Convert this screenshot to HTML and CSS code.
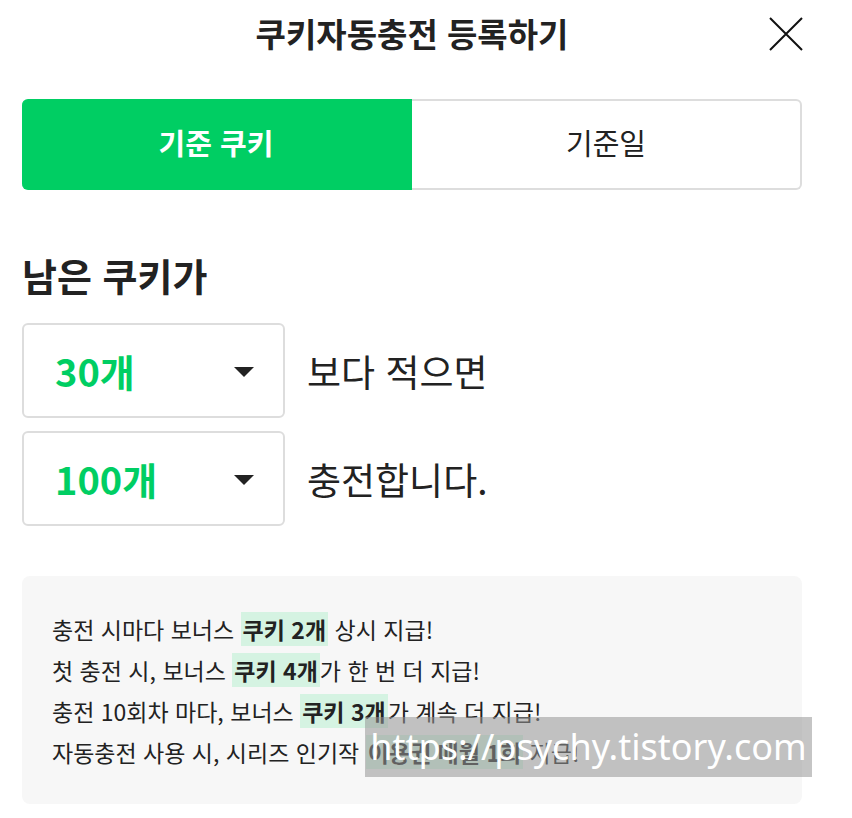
FILE: index.html
```html
<!DOCTYPE html>
<html lang="ko">
<head>
    <meta charset="UTF-8">
    <meta name="viewport" content="width=device-width, initial-scale=1.0">
    <title>쿠키자동충전 등록하기</title>
    <link rel="stylesheet" href="styles.css">
</head>
<body>
    <div class="sheet">
        <header class="sheet-head">
            <h1>쿠키자동충전 등록하기</h1>
            <button class="close" aria-label="닫기">
                <svg width="34" height="34" viewBox="0 0 34 34">
                    <path d="M1 1 L33 33 M33 1 L1 33" stroke="#111" stroke-width="2" fill="none"/>
                </svg>
            </button>
        </header>

        <div class="tabs">
            <button class="tab active">기준 쿠키</button>
            <button class="tab">기준일</button>
        </div>

        <h2 class="label">남은 쿠키가</h2>

        <div class="row">
            <div class="select">
                <span class="value">30개</span>
                <span class="caret"></span>
            </div>
            <span class="suffix">보다 적으면</span>
        </div>
        <div class="row">
            <div class="select">
                <span class="value">100개</span>
                <span class="caret"></span>
            </div>
            <span class="suffix">충전합니다.</span>
        </div>

        <!-- 혜택 안내 -->
        <div class="notice">
            <p>충전 시마다 보너스 <b>쿠키 2개</b> 상시 지급!</p>
            <p>첫 충전 시, 보너스 <b>쿠키 4개</b>가 한 번 더 지급!</p>
            <p>충전 10회차 마다, 보너스 <b>쿠키 3개</b>가 계속 더 지급!</p>
            <p>자동충전 사용 시, 시리즈 인기작 <b>이용권 매월 1회</b> 지급!</p>
        </div>
    </div>

    <div class="watermark">https://psychy.tistory.com</div>
</body>
</html>
```

FILE: styles.css
```css
body {
    margin: 0;
    background: #fff;
    color: #222;
    font-family: "Noto Sans CJK KR", "Noto Sans", sans-serif;
}
.sheet {
    width: 780px;
    margin-left: 22px;
}
.sheet-head {
    height: 70px;
    box-sizing: border-box;
    padding-bottom: 4px;
    display: flex;
    align-items: center;
    justify-content: center;
    position: relative;
}
.sheet-head h1 {
    margin: 0;
    font-size: 33px;
    font-weight: 700;
    line-height: 40px;
}
.close {
    position: absolute;
    right: -1px;
    top: 17px;
    width: 34px;
    height: 34px;
    padding: 0;
    border: none;
    background: none;
}
.close svg {
    display: block;
}
.tabs {
    margin-top: 29px;
    display: flex;
    height: 91px;
}
.tab {
    flex: 1;
    font-family: inherit;
    font-size: 29px;
    color: #222;
    background: #fff;
    border: 2px solid #ddd;
    border-left: none;
    border-radius: 0 6px 6px 0;
    padding: 0 0 5px;
}
.tab.active {
    background: #00ce63;
    border-color: #00ce63;
    color: #fff;
    font-weight: 700;
    border-radius: 6px 0 0 6px;
}
.label {
    margin: 60px 0 23px;
    font-size: 38px;
    font-weight: 700;
    line-height: 50px;
}
.row {
    display: flex;
    align-items: center;
    gap: 22px;
    margin-bottom: 13px;
}
.select {
    width: 263px;
    height: 95px;
    box-sizing: border-box;
    border: 2px solid #ddd;
    border-radius: 6px;
    display: flex;
    align-items: center;
    justify-content: space-between;
    padding: 0 29px 0 31px;
}
.value {
    color: #00ce63;
    font-size: 38px;
    font-weight: 700;
}
.caret {
    width: 0;
    height: 0;
    border-left: 10px solid transparent;
    border-right: 10px solid transparent;
    border-top: 10px solid #222;
    margin-top: 3px;
}
.suffix {
    font-size: 37px;
}
.notice {
    margin-top: 50px;
    background: #f7f7f7;
    border-radius: 8px;
    padding: 33px 30px 31px;
}
.notice p {
    margin: 0;
    font-size: 23px;
    line-height: 41px;
}
.notice b {
    background: #d5f3e2;
    padding: 0 2px;
}
.watermark {
    position: absolute;
    left: 365px;
    top: 717px;
    width: 447px;
    height: 60px;
    background: rgba(150, 150, 150, 0.55);
    color: #fff;
    font-family: "Noto Sans", sans-serif;
    font-size: 36px;
    line-height: 60px;
    text-align: center;
}
```
